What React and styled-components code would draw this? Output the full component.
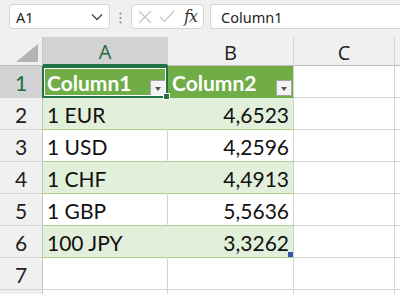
import styled, { createGlobalStyle } from "styled-components";

const GlobalStyle = createGlobalStyle`
  body {
    margin: 0;
    background: #ffffff;
    font-family: "Lato", "Liberation Sans", sans-serif;
    overflow: hidden;
  }
`;

const Page = styled.div`
  width: 400px;
  height: 294px;
  overflow: hidden;
  background: #ffffff;
`;

const FormulaBar = styled.div`
  height: 37px;
  background: #f0f0f0;
  display: flex;
  align-items: flex-start;
  padding: 4px 0 0 9px;
  box-sizing: border-box;
`;

const Box = styled.div`
  height: 25px;
  box-sizing: border-box;
  border: 1px solid #d5d5d5;
  border-radius: 4px;
  background: #ffffff;
  display: flex;
  align-items: center;
`;

const NameBox = styled(Box)`
  width: 101px;
  padding: 0 6px 0 6px;
  justify-content: space-between;
  font-family: "Noto Sans", "Open Sans", sans-serif;
  font-size: 14.5px;
  color: #222;
`;

const Dots = styled.div`
  width: 21px;
  display: flex;
  justify-content: center;
  padding-top: 8px;
`;

const ActionBox = styled(Box)`
  width: 73px;
  padding: 0 0 0 6px;
  gap: 7px;
`;

const FxLabel = styled.span`
  font-family: "DejaVu Serif", "Liberation Serif", serif;
  font-style: italic;
  font-size: 16px;
  color: #333;
  margin-left: 2px;
  letter-spacing: -1px;
`;

const InputBox = styled(Box)`
  margin-left: 6px;
  flex: 1;
  border-right: none;
  border-radius: 4px 0 0 4px;
  padding-left: 10px;
  font-family: "Noto Sans", "Open Sans", sans-serif;
  font-size: 14.5px;
  color: #222;
`;

const Sheet = styled.div`
  display: grid;
  grid-template-columns: 43px 125px 126px 101px 40px;
  grid-template-rows: 29px repeat(8, 32px);
`;

const Corner = styled.div`
  background: #f0f0f0;
  border-right: 1px solid #c4c4c4;
  border-bottom: 1px solid #bdbdbd;
  display: flex;
  align-items: flex-end;
  justify-content: flex-end;
  padding: 0 4px 3px 0;
`;

const ColHead = styled.div`
  background: ${(p) => (p.$selected ? "#d2d2d2" : "#f0f0f0")};
  color: ${(p) => (p.$selected ? "#1e6b3f" : "#222")};
  border-right: 1px solid #d4d4d4;
  border-bottom: ${(p) => (p.$selected ? "2px solid #217346" : "1px solid #bdbdbd")};
  display: flex;
  align-items: center;
  justify-content: center;
  font-family: "Open Sans", "Liberation Sans", sans-serif;
  font-size: 20px;
  padding-top: 2px;
`;

const RowHead = styled.div`
  background: ${(p) => (p.$selected ? "#d2d2d2" : "#f0f0f0")};
  color: ${(p) => (p.$selected ? "#1e6b3f" : "#222")};
  border-right: 1px solid #c4c4c4;
  border-bottom: 1px solid #d4d4d4;
  display: flex;
  align-items: flex-end;
  justify-content: center;
  padding-bottom: 4px;
  box-sizing: border-box;
  font-family: "Lato", "Liberation Sans", sans-serif;
  font-size: 21px;
  line-height: 21px;
`;

const Cell = styled.div`
  position: relative;
  box-sizing: border-box;
  background: ${(p) => p.$fill || "#ffffff"};
  border-right: 1px solid ${(p) => p.$vline || "#d4d4d4"};
  border-bottom: 1px solid ${(p) => p.$hline || "#d4d4d4"};
  display: flex;
  align-items: flex-end;
  justify-content: ${(p) => (p.$right ? "flex-end" : "flex-start")};
  padding: 0 4px 4px 4px;
  font-size: 21px;
  line-height: 21px;
  color: #111;
`;

const HeaderCell = styled(Cell)`
  background: #70ad47;
  color: #ffffff;
  font-weight: 700;
  justify-content: space-between;
  padding: 0 1px 1px 4px;
  border-bottom-color: #70ad47;
  border-right-color: ${(p) => p.$vline || "#70ad47"};
  span {
    padding-bottom: 3px;
  }
`;

const ActiveCell = styled(HeaderCell)`
  &::after {
    content: "";
    position: absolute;
    left: -1px;
    top: 0;
    right: -1px;
    bottom: -1px;
    border: 2px solid #217346;
    box-shadow: inset 0 0 0 1px #ffffff;
    pointer-events: none;
  }
  &::before {
    content: "";
    position: absolute;
    right: -3px;
    bottom: -3px;
    width: 5px;
    height: 5px;
    background: #217346;
    border: 1px solid #ffffff;
    z-index: 2;
  }
`;

const FilterButton = styled.div`
  width: 16px;
  height: 16px;
  flex-shrink: 0;
  box-sizing: border-box;
  background: #f3f3f3;
  border: 1px solid #a6a6a6;
  display: flex;
  align-items: center;
  justify-content: center;
  &::after {
    content: "";
    border-left: 3.5px solid transparent;
    border-right: 3.5px solid transparent;
    border-top: 4px solid #555;
    margin-top: 2px;
  }
`;

const ResizeHandle = styled.div`
  position: absolute;
  right: 0;
  bottom: 0;
  width: 5px;
  height: 5px;
  background: #3f4fb0;
`;

const ChevronDown = () => (
  <svg width="12" height="8" viewBox="0 0 12 8">
    <path d="M1 1.5 L6 6.5 L11 1.5" fill="none" stroke="#444" strokeWidth="1.3" />
  </svg>
);

const VDots = () => (
  <svg width="3" height="12" viewBox="0 0 3 12">
    <circle cx="1.5" cy="1.5" r="1.1" fill="#8a8a8a" />
    <circle cx="1.5" cy="6" r="1.1" fill="#8a8a8a" />
    <circle cx="1.5" cy="10.5" r="1.1" fill="#8a8a8a" />
  </svg>
);

const CrossIcon = () => (
  <svg width="14" height="14" viewBox="0 0 14 14">
    <path d="M1 1 L13 13 M13 1 L1 13" stroke="#c3c3c3" strokeWidth="1.2" />
  </svg>
);

const CheckIcon = () => (
  <svg width="16" height="13" viewBox="0 0 16 13">
    <path d="M1 7 L5.5 11.5 L15 1" fill="none" stroke="#c3c3c3" strokeWidth="1.2" />
  </svg>
);

const CornerTriangle = () => (
  <svg width="22" height="18" viewBox="0 0 22 18">
    <polygon points="22,0 22,18 0,18" fill="#b4b4b4" />
  </svg>
);

const rows = [
  ["1 EUR", "4,6523"],
  ["1 USD", "4,2596"],
  ["1 CHF", "4,4913"],
  ["1 GBP", "5,5636"],
  ["100 JPY", "3,3262"],
];

export default function App() {
  return (
    <Page>
      <GlobalStyle />
      <FormulaBar>
        <NameBox>
          <span>A1</span>
          <ChevronDown />
        </NameBox>
        <Dots>
          <VDots />
        </Dots>
        <ActionBox>
          <CrossIcon />
          <CheckIcon />
          <FxLabel>fx</FxLabel>
        </ActionBox>
        <InputBox>Column1</InputBox>
      </FormulaBar>
      <Sheet>
        <Corner>
          <CornerTriangle />
        </Corner>
        <ColHead $selected>A</ColHead>
        <ColHead>B</ColHead>
        <ColHead>C</ColHead>
        <ColHead />

        <RowHead $selected>1</RowHead>
        <ActiveCell>
          <span>Column1</span>
          <FilterButton />
        </ActiveCell>
        <HeaderCell $vline="#d4d4d4">
          <span>Column2</span>
          <FilterButton />
        </HeaderCell>
        <Cell />
        <Cell />

        {rows.map(([a, b], i) => {
          const band = i % 2 === 0;
          const fill = band ? "#e2efda" : "#ffffff";
          return [
            <RowHead key={`h${i}`}>{i + 2}</RowHead>,
            <Cell
              key={`a${i}`}
              $fill={fill}
              $hline="#a9d08e"
              $vline={band ? "#e2efda" : "#d4d4d4"}
            >
              {a}
            </Cell>,
            <Cell
              key={`b${i}`}
              $fill={fill}
              $hline="#a9d08e"
              $vline={band ? "#c5dbb5" : "#d4d4d4"}
              $right
            >
              {b}
              {i === rows.length - 1 && <ResizeHandle />}
            </Cell>,
            <Cell key={`c${i}`} />,
            <Cell key={`d${i}`} />,
          ];
        })}

        <RowHead>7</RowHead>
        <Cell />
        <Cell />
        <Cell />
        <Cell />

        <RowHead />
        <Cell />
        <Cell />
        <Cell />
        <Cell />
      </Sheet>
    </Page>
  );
}
